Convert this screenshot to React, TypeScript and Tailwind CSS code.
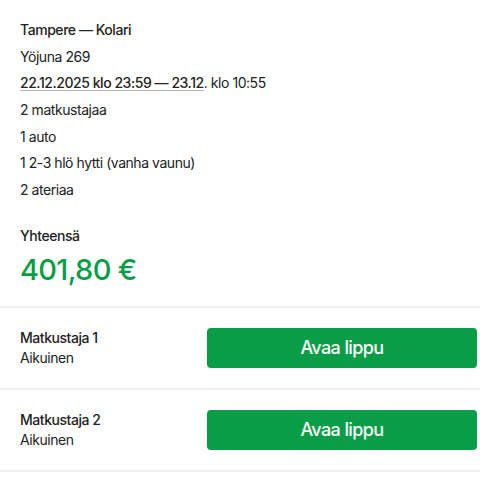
import React from "react";

const font = { fontFamily: "Inter, 'Noto Sans', sans-serif" };

function Row({ n }: { n: number }) {
  return (
    <div className="flex items-center pl-5 pr-[3px] py-5 border-b-2 border-[#efefef]">
      <div className="flex-1 flex flex-col tracking-[-0.45px]">
        <span className="text-[14px] leading-5 font-medium text-[#222]">Matkustaja {n}</span>
        <span className="text-[14px] leading-5 text-[#222]">Aikuinen</span>
      </div>
      <button className="w-[270px] h-10 rounded-[4px] bg-[#0a9d47] text-white text-[18px] font-medium tracking-[-0.6px]">
        Avaa lippu
      </button>
    </div>
  );
}

export default function App() {
  const lines = ["2 matkustajaa", "1 auto", "1 2-3 hlö hytti (vanha vaunu)", "2 ateriaa"];
  return (
    <div className="w-[480px] h-[480px] bg-white overflow-hidden text-[#222]" style={font}>
      <div className="px-5 pt-[17px] border-b-2 border-[#efefef] pb-[17px] tracking-[-0.45px]">
        <div className="flex flex-col text-[14px] leading-[26.67px]">
          <div className="font-medium">Tampere — Kolari</div>
          <div>Yöjuna 269</div>
          <div>
            <span className="font-medium underline decoration-[#b5b5b5] underline-offset-[2px]">
              22.12.2025 klo 23:59 — 23.12
            </span>
            . klo 10:55
          </div>
          {lines.map((l) => (
            <div key={l}>{l}</div>
          ))}
        </div>
        <div className="mt-[22px] text-[14px] leading-5 font-medium">Yhteensä</div>
        <div className="mt-[5px] text-[29px] leading-[38px] font-medium text-[#0a9d47] tracking-[-0.7px]">401,80 €</div>
      </div>
      <Row n={1} />
      <Row n={2} />
    </div>
  );
}
